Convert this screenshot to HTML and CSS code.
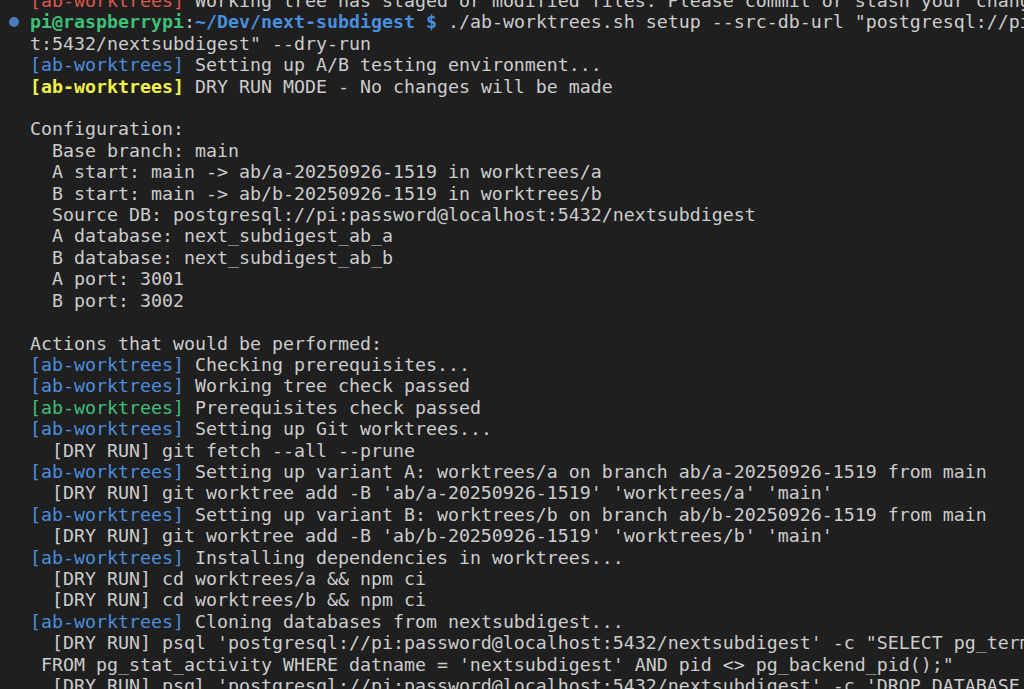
FILE: index.html
```html
<!DOCTYPE html>
<html>
<head>
<meta charset="utf-8">
<link rel="stylesheet" href="styles.css">
</head>
<body>
<div class="term">
  <div class="lines">
    <div class="line"><span class="red">[ab-worktrees]</span> Working tree has staged or modified files. Please commit or stash your changes first.</div>
    <div class="line prompt-line"><span class="mark"></span><span class="green b">pi@raspberrypi</span>:<span class="blue b">~/Dev/next-subdigest $</span> ./ab-worktrees.sh setup --src-db-url "postgresql://pi:password@localhos</div>
    <div class="line">t:5432/nextsubdigest" --dry-run</div>
    <div class="line"><span class="blue">[ab-worktrees]</span> Setting up A/B testing environment...</div>
    <div class="line"><span class="yellow b">[ab-worktrees]</span> DRY RUN MODE - No changes will be made</div>
    <div class="line"> </div>
    <div class="line">Configuration:</div>
    <div class="line">  Base branch: main</div>
    <div class="line">  A start: main -&gt; ab/a-20250926-1519 in worktrees/a</div>
    <div class="line">  B start: main -&gt; ab/b-20250926-1519 in worktrees/b</div>
    <div class="line">  Source DB: postgresql://pi:password@localhost:5432/nextsubdigest</div>
    <div class="line">  A database: next_subdigest_ab_a</div>
    <div class="line">  B database: next_subdigest_ab_b</div>
    <div class="line">  A port: 3001</div>
    <div class="line">  B port: 3002</div>
    <div class="line"> </div>
    <div class="line">Actions that would be performed:</div>
    <div class="line"><span class="blue">[ab-worktrees]</span> Checking prerequisites...</div>
    <div class="line"><span class="blue">[ab-worktrees]</span> Working tree check passed</div>
    <div class="line"><span class="green">[ab-worktrees]</span> Prerequisites check passed</div>
    <div class="line"><span class="blue">[ab-worktrees]</span> Setting up Git worktrees...</div>
    <div class="line">  [DRY RUN] git fetch --all --prune</div>
    <div class="line"><span class="blue">[ab-worktrees]</span> Setting up variant A: worktrees/a on branch ab/a-20250926-1519 from main</div>
    <div class="line">  [DRY RUN] git worktree add -B 'ab/a-20250926-1519' 'worktrees/a' 'main'</div>
    <div class="line"><span class="blue">[ab-worktrees]</span> Setting up variant B: worktrees/b on branch ab/b-20250926-1519 from main</div>
    <div class="line">  [DRY RUN] git worktree add -B 'ab/b-20250926-1519' 'worktrees/b' 'main'</div>
    <div class="line"><span class="blue">[ab-worktrees]</span> Installing dependencies in worktrees...</div>
    <div class="line">  [DRY RUN] cd worktrees/a &amp;&amp; npm ci</div>
    <div class="line">  [DRY RUN] cd worktrees/b &amp;&amp; npm ci</div>
    <div class="line"><span class="blue">[ab-worktrees]</span> Cloning databases from nextsubdigest...</div>
    <div class="line">  [DRY RUN] psql 'postgresql://pi:password@localhost:5432/nextsubdigest' -c "SELECT pg_terminate_backend(pid)</div>
    <div class="line"> FROM pg_stat_activity WHERE datname = 'nextsubdigest' AND pid &lt;&gt; pg_backend_pid();"</div>
    <div class="line">  [DRY RUN] psql 'postgresql://pi:password@localhost:5432/nextsubdigest' -c 'DROP DATABASE IF EXISTS next_subdig</div>
  </div>
</div>
</body>
</html>
```

FILE: styles.css
```css
html, body {
  margin: 0;
  padding: 0;
  background: #1f1f1f;
  overflow: hidden;
  width: 1024px;
  height: 689px;
}

.term {
  width: 1024px;
  height: 689px;
  overflow: hidden;
  background: #1f1f1f;
  color: #cccccc;
  font-family: "DejaVu Sans Mono", "Liberation Mono", monospace;
  font-size: 18.27px;
  line-height: 21.42px;
}

.lines {
  margin-top: -10px;
  padding-left: 30px;
}

.line {
  white-space: pre;
  height: 21.42px;
  position: relative;
}

.mark {
  position: absolute;
  left: -21px;
  top: 6px;
  width: 10px;
  height: 10px;
  border-radius: 50%;
  background: #4a7cbd;
}

.b { font-weight: bold; }
.red { color: #d9574d; }
.green { color: #3fbf78; }
.blue { color: #4a8ede; }
.yellow { color: #f2f24a; }
```
